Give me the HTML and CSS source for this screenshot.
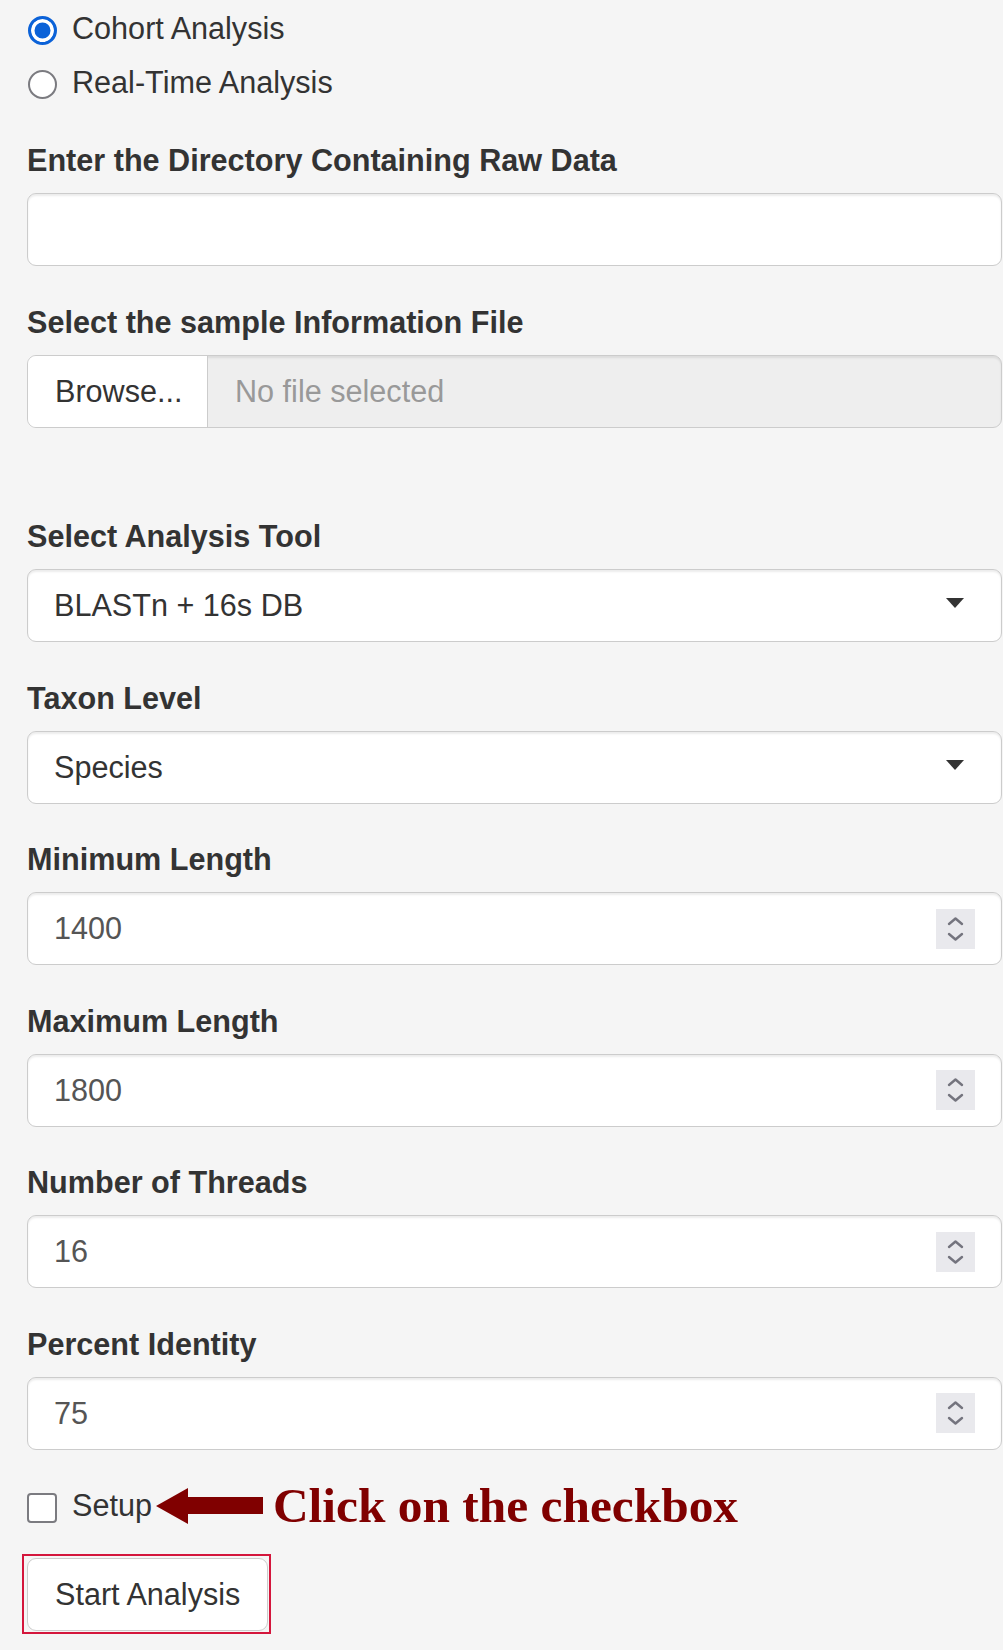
FILE: index.html
```html
<!DOCTYPE html>
<html lang="en">
<head>
<meta charset="utf-8">
<title>Cohort Analysis</title>
<link rel="stylesheet" href="styles.css">
</head>
<body>
<div class="panel">
  <div class="radio-group">
    <label class="radio"><span class="radio-dot is-checked"></span>Cohort Analysis</label>
    <label class="radio"><span class="radio-dot"></span>Real-Time Analysis</label>
  </div>

  <div class="field">
    <label class="field-label">Enter the Directory Containing Raw Data</label>
    <div class="control"></div>
  </div>

  <div class="field field-file">
    <label class="field-label">Select the sample Information File</label>
    <div class="file-input">
      <span class="browse">Browse...</span>
      <span class="file-name">No file selected</span>
    </div>
  </div>

  <div class="field">
    <label class="field-label">Select Analysis Tool</label>
    <div class="control select"><span>BLASTn + 16s DB</span><span class="caret"></span></div>
  </div>

  <div class="field">
    <label class="field-label">Taxon Level</label>
    <div class="control select"><span>Species</span><span class="caret"></span></div>
  </div>

  <div class="field">
    <label class="field-label">Minimum Length</label>
    <div class="control number"><span>1400</span>
      <span class="spinner"><svg width="39" height="40" viewBox="0 0 39 40"><path d="M13 15 L19.5 9.5 L26 15" /><path d="M13 25 L19.5 30.5 L26 25" /></svg></span>
    </div>
  </div>

  <div class="field">
    <label class="field-label">Maximum Length</label>
    <div class="control number"><span>1800</span>
      <span class="spinner"><svg width="39" height="40" viewBox="0 0 39 40"><path d="M13 15 L19.5 9.5 L26 15" /><path d="M13 25 L19.5 30.5 L26 25" /></svg></span>
    </div>
  </div>

  <div class="field">
    <label class="field-label">Number of Threads</label>
    <div class="control number"><span>16</span>
      <span class="spinner"><svg width="39" height="40" viewBox="0 0 39 40"><path d="M13 15 L19.5 9.5 L26 15" /><path d="M13 25 L19.5 30.5 L26 25" /></svg></span>
    </div>
  </div>

  <div class="field">
    <label class="field-label">Percent Identity</label>
    <div class="control number"><span>75</span>
      <span class="spinner"><svg width="39" height="40" viewBox="0 0 39 40"><path d="M13 15 L19.5 9.5 L26 15" /><path d="M13 25 L19.5 30.5 L26 25" /></svg></span>
    </div>
  </div>

  <div class="check-row">
    <label class="check"><span class="check-box"></span>Setup</label>
    <svg class="arrow" width="107" height="36" viewBox="0 0 107 36"><polygon points="0,18 32,0 32,9 107,9 107,26 32,26 32,36" /></svg>
    <span class="hint">Click on the checkbox</span>
  </div>

  <div class="highlight">
    <button class="start-btn" type="button">Start Analysis</button>
  </div>
</div>
</body>
</html>
```

FILE: styles.css
```css
html, body {
  margin: 0;
  padding: 0;
  background: #f5f5f5;
}

body {
  font-family: "Liberation Sans", Arial, sans-serif;
  font-size: 30.6px;
  color: #333;
}

.panel {
  width: 975px;
  padding: 7px 1px 0 27px;
}

/* radios */
.radio-group {
  margin-bottom: 35px;
}

.radio {
  display: flex;
  align-items: center;
  height: 43px;
  line-height: 43px;
  padding-left: 1px;
}

.radio + .radio {
  margin-top: 11px;
}

.radio-dot {
  box-sizing: border-box;
  width: 29px;
  height: 29px;
  border-radius: 50%;
  border: 2.5px solid #7b7b80;
  background: #fff;
  margin-right: 15px;
  margin-top: 3px;
}

.radio-dot.is-checked {
  border: 3.5px solid #0b62d8;
  background: #0b62d8;
  box-shadow: inset 0 0 0 3.5px #fff;
}

/* fields */
.field {
  margin-bottom: 34.5px;
}

.field-file {
  margin-bottom: 87.5px;
}

.field-label {
  display: block;
  font-weight: bold;
  line-height: 43px;
  margin-bottom: 11px;
}

.control {
  box-sizing: border-box;
  height: 73px;
  background: #fff;
  border: 1px solid #ccc;
  border-radius: 9px;
  box-shadow: inset 0 2px 2px rgba(0, 0, 0, 0.075);
}

.select {
  display: flex;
  align-items: center;
  justify-content: space-between;
  padding: 0 37px 0 26px;
  color: #333;
}

.caret {
  width: 0;
  height: 0;
  border-left: 9px solid transparent;
  border-right: 9px solid transparent;
  border-top: 10px solid #333;
  margin-bottom: 5px;
}

.number {
  display: flex;
  align-items: center;
  justify-content: space-between;
  padding: 0 26px 0 26px;
  color: #555;
}

.spinner {
  display: flex;
  width: 39px;
  height: 40px;
  background: #e9e9ed;
}

.spinner path {
  fill: none;
  stroke: #74747e;
  stroke-width: 2.4;
  stroke-linecap: round;
  stroke-linejoin: round;
}

/* file input */
.file-input {
  display: flex;
  box-sizing: border-box;
  height: 73px;
  border: 1px solid #ccc;
  border-radius: 9px;
  overflow: hidden;
  background: #eee;
  box-shadow: inset 0 2px 2px rgba(0, 0, 0, 0.075);
}

.browse {
  display: flex;
  align-items: center;
  width: 180px;
  box-sizing: border-box;
  padding-left: 27px;
  background: #fff;
  border-right: 1px solid #ccc;
  color: #333;
}

.file-name {
  display: flex;
  align-items: center;
  padding-left: 27px;
  color: #999;
}

/* checkbox row */
.check-row {
  display: flex;
  align-items: center;
  height: 43px;
}

.check {
  display: flex;
  align-items: center;
  line-height: 43px;
}

.check-box {
  box-sizing: border-box;
  width: 30px;
  height: 30px;
  border: 2.5px solid #7b7b80;
  border-radius: 4px;
  background: #fff;
  margin-right: 15px;
  margin-top: 4px;
}

.arrow {
  margin-left: 4px;
  flex-shrink: 0;
}

.arrow polygon {
  fill: #800000;
}

.hint {
  margin-left: 10px;
  font-family: "Liberation Serif", "Times New Roman", serif;
  font-weight: bold;
  font-size: 49.4px;
  color: #800000;
  white-space: nowrap;
}

/* button */
.highlight {
  display: inline-block;
  margin-top: 27px;
  margin-left: -5px;
  padding: 2px 1px 1px 3px;
  border: 2px solid #d4163c;
}

.start-btn {
  display: block;
  box-sizing: border-box;
  height: 73px;
  padding: 0 27px;
  background: #fff;
  border: 1px solid #ccc;
  border-radius: 9px;
  font-family: "Liberation Sans", Arial, sans-serif;
  font-size: 30.6px;
  color: #333;
}
```
